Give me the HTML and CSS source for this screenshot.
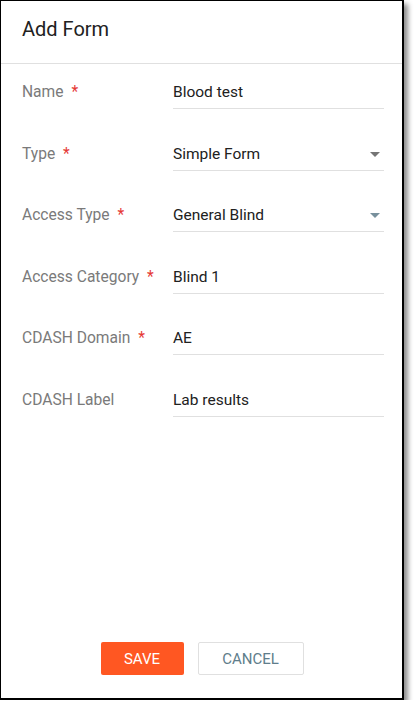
FILE: index.html
```html
<!DOCTYPE html>
<html lang="en">
<head>
    <meta charset="UTF-8">
    <meta name="viewport" content="width=device-width, initial-scale=1.0">
    <title>Add Form</title>
    <link rel="stylesheet" href="styles.css">
</head>
<body>
    <div class="dialog">
        <div class="dialog-header">
            <h2>Add Form</h2>
        </div>
        <div class="dialog-body">
            <div class="field">
                <label>Name <span class="req">*</span></label>
                <div class="value">Blood test</div>
            </div>
            <div class="field">
                <label>Type <span class="req">*</span></label>
                <div class="value select">Simple Form <span class="caret"></span></div>
            </div>
            <div class="field">
                <label>Access Type <span class="req">*</span></label>
                <div class="value select">General Blind <span class="caret blue"></span></div>
            </div>
            <div class="field">
                <label>Access Category <span class="req">*</span></label>
                <div class="value">Blind 1</div>
            </div>
            <div class="field">
                <label>CDASH Domain <span class="req">*</span></label>
                <div class="value">AE</div>
            </div>
            <div class="field">
                <label>CDASH Label</label>
                <div class="value">Lab results</div>
            </div>
        </div>
        <div class="dialog-footer">
            <button class="btn btn-save">Save</button>
            <button class="btn btn-cancel">Cancel</button>
        </div>
    </div>
</body>
</html>
```

FILE: styles.css
```css
body {
    margin: 0;
    font-family: Roboto, "Noto Sans", sans-serif;
    background: #fff;
}

.dialog {
    width: 401px;
    height: 697px;
    border-style: solid;
    border-color: #000;
    border-width: 1px 2px 2px 1px;
    background: #fff;
    box-shadow: 4px 4px 5px rgba(0,0,0,0.45);
    display: flex;
    flex-direction: column;
}

.dialog-header {
    padding: 16px 21px 22px;
    border-bottom: 1px solid #e0e0e0;
}

.dialog-header h2 {
    margin: 0;
    font-size: 20px;
    line-height: 24px;
    font-weight: 400;
    color: #212121;
}

.dialog-body {
    padding: 16px 18px 0 21px;
}

.field {
    display: flex;
    align-items: flex-start;
    height: 61.6px;
}

.field label {
    width: 151px;
    font-size: 15.6px;
    line-height: 24px;
    color: #7a7a7a;
}

.req {
    color: #e53935;
    margin-left: 4px;
}

.value {
    flex: 1;
    position: relative;
    font-size: 15.5px;
    line-height: 24px;
    padding-bottom: 4px;
    color: #212121;
    border-bottom: 1px solid #e0e0e0;
}

.caret {
    position: absolute;
    right: 4px;
    top: 10px;
    width: 0;
    height: 0;
    border-left: 5px solid transparent;
    border-right: 5px solid transparent;
    border-top: 5px solid #757575;
}

.caret.blue {
    border-top-color: #78909c;
}

.dialog-footer {
    margin-top: auto;
    padding: 0 0 23px 1px;
    display: flex;
    justify-content: center;
    gap: 14px;
}

.btn {
    font-family: Roboto, "Noto Sans", sans-serif;
    font-size: 15px;
    text-transform: uppercase;
    height: 33px;
    border-radius: 2px;
    cursor: pointer;
}

.btn-save {
    width: 83px;
    background: #ff5722;
    color: #fff;
    border: none;
}

.btn-cancel {
    width: 106px;
    background: #fff;
    color: #607d8b;
    border: 1px solid #e0e0e0;
}
```
